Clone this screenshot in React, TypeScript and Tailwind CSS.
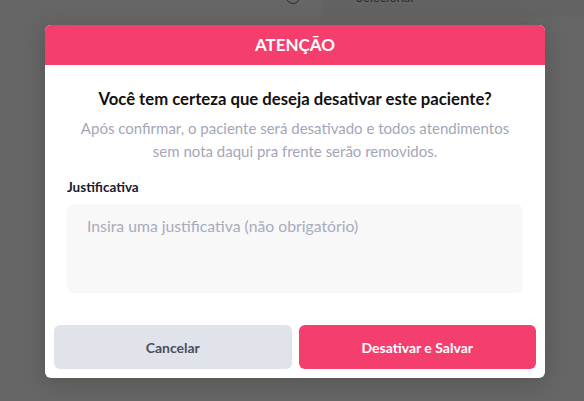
import React from "react";

export default function App() {
  return (
    <div className="relative w-[584px] h-[401px] overflow-hidden bg-[#666666]" style={{ fontFamily: 'Lato, "Noto Sans", sans-serif' }}>
      {/* background page hints (under overlay) */}
      <div className="absolute left-[286px] top-[-10px] w-[14px] h-[14px] rounded-full border-[1.5px] border-[#2a2a2a]" />
      <div className="absolute left-[322px] top-[-4px] w-[262px] h-[21px] bg-[#636363]" />
      <div className="absolute left-[356px] top-[-11px] text-[13px] leading-[16px] text-[#2e2e2e]">Selecionar</div>

      <div className="flex pt-[25px] pl-[45px]">
        <div className="relative w-[500px] rounded-md bg-white shadow-[0_4px_24px_rgba(0,0,0,0.18)] overflow-hidden">
          <div className="h-[40px] bg-[#f43f6e] flex items-center justify-center text-white text-[17px] font-bold">
            ATENÇÃO
          </div>
          <div className="px-[22px] pt-[22px]">
            <h2 className="text-center text-[16.7px] font-bold text-[#111111] leading-[24px] whitespace-nowrap">
              Você tem certeza que deseja desativar este paciente?
            </h2>
            <p className="mt-[6px] text-center text-[15px] leading-[23px] text-[#a4a6b8] whitespace-nowrap">
              Após confirmar, o paciente será desativado e todos atendimentos
              <br />
              sem nota daqui pra frente serão removidos.
            </p>
            <label className="block mt-[15px] text-[13.5px] font-bold text-[#1a1a2a] leading-[18px]">
              Justificativa
            </label>
            <textarea
              className="mt-[8px] block w-full h-[89px] resize-none rounded-lg bg-[#f8f8f9] px-[20px] py-[12px] text-[15.75px] leading-[20px] text-[#333] placeholder:text-[#a9abbd] outline-none"
              placeholder="Insira uma justificativa (não obrigatório)"
            />
          </div>
          <div className="flex gap-[7px] px-[9px] pt-[32px] pb-[9px]">
            <button className="flex-1 h-[44px] rounded-md bg-[#e0e3ea] text-[14px] font-bold text-[#4a4d5e]">
              Cancelar
            </button>
            <button className="flex-1 h-[44px] rounded-md bg-[#f43f6e] text-[14px] font-bold text-white">
              Desativar e Salvar
            </button>
          </div>
        </div>
      </div>
    </div>
  );
}
